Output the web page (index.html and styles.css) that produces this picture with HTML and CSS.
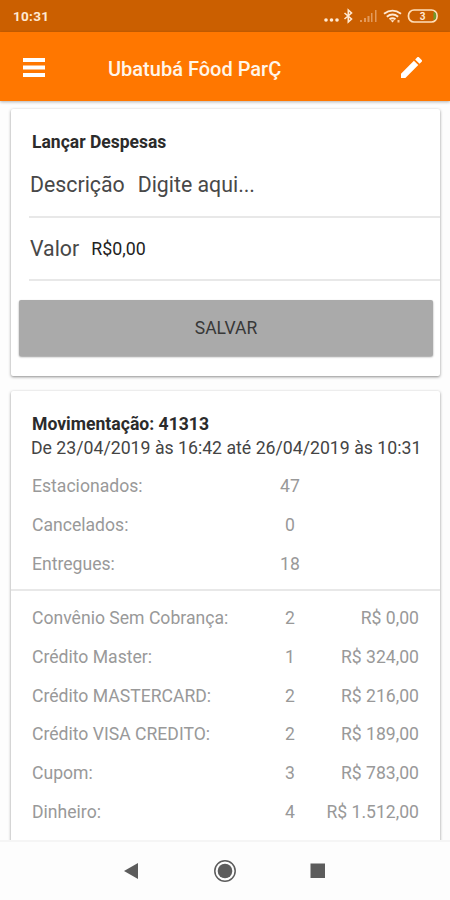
FILE: index.html
```html
<!DOCTYPE html>
<html lang="pt-BR">
<head>
    <meta charset="UTF-8">
    <meta name="viewport" content="width=device-width, initial-scale=1.0">
    <title>Ubatubá Fôod ParÇ</title>
    <link rel="stylesheet" href="styles.css">
</head>
<body>
    <div class="screen">
        <!-- Status Bar -->
        <div class="status-bar">
            <span class="clock">10:31</span>
            <svg class="status-icons" width="116" height="18" viewBox="0 0 116 18">
                <g fill="#ffe9d2">
                    <circle cx="2" cy="13" r="1.8"/>
                    <circle cx="7.500" cy="13" r="1.8"/>
                    <circle cx="13" cy="13" r="1.8"/>
                </g>
                <path d="M20.500 6 L27.500 12 L24.300 15 V3 L27.500 6 L20.500 12" fill="none" stroke="#ffe9d2" stroke-width="1.6"/>
                <g fill="#e39a5b">
                    <rect x="36" y="13" width="2" height="2"/>
                    <rect x="40" y="11" width="2" height="4"/>
                    <rect x="43.500" y="9" width="2" height="6"/>
                    <rect x="47" y="6" width="1.500" height="9"/>
                    <rect x="51" y="3" width="1.500" height="12"/>
                </g>
                <g fill="none" stroke="#ffe9d2" stroke-width="1.9">
                    <path d="M60 6.800 Q68.500 .5 77 6.800"/>
                    <path d="M62.800 9.700 Q68.500 5.300 74.200 9.700"/>
                    <path d="M65.500 12.300 Q68.500 10 71.500 12.300"/>
                </g>
                <path d="M66.500 13.300 H70.500 L68.500 15.600 Z" fill="#ffe9d2"/>
                <rect x="73.500" y="13" width="2" height="2.500" fill="#ffc794"/>
                <rect x="84.500" y="3" width="28.500" height="12" rx="5.500" fill="none" stroke="#ffe0bb" stroke-width="1.700"/>
                <path d="M109.500 5 Q112.500 5 112.200 9 Q112.500 13 109.500 13 Z" fill="#6f9a2c"/>
                <text class="battery-text" x="98.500" y="12.800" text-anchor="middle">3</text>
            </svg>
        </div>

        <!-- Header -->
        <div class="header">
            <svg class="menu-icon" width="22" height="19" viewBox="0 0 22 19">
                <path d="M0 2 H22 M0 9.500 H22 M0 17 H22" stroke="#fff" stroke-width="3.800"/>
            </svg>
            <h1>Ubatubá Fôod ParÇ</h1>
            <svg class="edit-icon" width="21" height="21" viewBox="3 3 18 18">
                <path fill="#fff" d="M3 17.250V21h3.750L17.810 9.940l-3.750-3.750L3 17.250zM20.710 7.040c.39-.39.39-1.020 0-1.410l-2.340-2.340c-.39-.39-1.020-.39-1.410 0l-1.830 1.830 3.750 3.750 1.830-1.830z"/>
            </svg>
        </div>

        <div class="content">
            <!-- Expense Form -->
            <div class="card form-card">
                <h2>Lançar Despesas</h2>
                <div class="field">
                    <span class="label">Descrição</span>
                    <span class="placeholder">Digite aqui...</span>
                </div>
                <div class="field value-field">
                    <span class="label">Valor</span>
                    <span class="amount">R$0,00</span>
                </div>
                <button class="save">SALVAR</button>
            </div>

            <!-- Movement -->
            <div class="card movement-card">
                <h2>Movimentação: 41313</h2>
                <p class="period">De 23/04/2019 às 16:42 até 26/04/2019 às 10:31</p>
                <div class="rows">
                    <div class="row"><span>Estacionados:</span><span class="count">47</span></div>
                    <div class="row"><span>Cancelados:</span><span class="count">0</span></div>
                    <div class="row"><span>Entregues:</span><span class="count">18</span></div>
                </div>
                <div class="rows payments">
                    <div class="row"><span>Convênio Sem Cobrança:</span><span class="count">2</span><span class="total">R$ 0,00</span></div>
                    <div class="row"><span>Crédito Master:</span><span class="count">1</span><span class="total">R$ 324,00</span></div>
                    <div class="row"><span>Crédito MASTERCARD:</span><span class="count">2</span><span class="total">R$ 216,00</span></div>
                    <div class="row"><span>Crédito VISA CREDITO:</span><span class="count">2</span><span class="total">R$ 189,00</span></div>
                    <div class="row"><span>Cupom:</span><span class="count">3</span><span class="total">R$ 783,00</span></div>
                    <div class="row"><span>Dinheiro:</span><span class="count">4</span><span class="total">R$ 1.512,00</span></div>
                </div>
            </div>
        </div>

        <!-- Navigation Bar -->
        <div class="nav-bar">
            <svg width="24" height="24" viewBox="0 0 24 24">
                <path d="M4 12 L18 4 V20 Z" fill="#5c5c5c"/>
            </svg>
            <svg width="24" height="24" viewBox="0 0 24 24">
                <circle cx="12" cy="12" r="10.200" fill="none" stroke="#5c5c5c" stroke-width="1.500"/>
                <circle cx="12" cy="12" r="7.300" fill="#5c5c5c"/>
            </svg>
            <svg width="24" height="24" viewBox="0 0 24 24">
                <rect x="4.500" y="4.500" width="14.500" height="14.500" fill="#5c5c5c"/>
            </svg>
        </div>
    </div>
</body>
</html>
```

FILE: styles.css
```css
body {
    margin: 0;
    font-family: Roboto, "Liberation Sans", sans-serif;
    background-color: #fdfdfd;
}
.screen {
    display: flex;
    flex-direction: column;
    height: 900px;
    overflow: hidden;
    white-space: nowrap;
}

/* Status Bar */
.status-bar {
    display: flex;
    justify-content: space-between;
    align-items: center;
    flex-shrink: 0;
    height: 32px;
    padding: 0 10px 0 13px;
    box-sizing: border-box;
    background-color: #cb5f00;
}
.clock {
    color: #ffe9d2;
    font-size: 13.5px;
    font-weight: bold;
    letter-spacing: 0.3px;
}
.battery-text {
    fill: #ffe9d2;
    font-size: 10px;
    font-weight: bold;
}

/* Header */
.header {
    display: flex;
    align-items: center;
    flex-shrink: 0;
    height: 69px;
    padding: 2px 28px 0 23px;
    box-sizing: border-box;
    background-color: #ff7700;
    box-shadow: 0 1px 3px rgba(0, 0, 0, 0.3);
    z-index: 1;
}
.header h1 {
    flex: 1;
    margin: 2px 0 0 63px;
    color: #fff6ea;
    font-size: 20px;
    font-weight: 500;
    line-height: 24px;
}

/* Cards */
.content {
    flex: 1;
    min-height: 0;
    overflow: hidden;
    padding: 8px 10px 0 11px;
}
.card {
    background-color: #fff;
    border-radius: 2px;
    box-shadow: 0 1px 3px rgba(0, 0, 0, 0.45);
    box-sizing: border-box;
    overflow: hidden;
}
.card h2 {
    margin: 0;
    padding-left: 21px;
    color: #2b2b2b;
    font-size: 17.5px;
    font-weight: bold;
    line-height: 24px;
}
.form-card {
    height: 267px;
    padding-top: 21px;
    margin-bottom: 15px;
}
.field {
    display: flex;
    align-items: center;
    height: 61px;
    margin-left: 18px;
    padding-left: 1px;
    border-bottom: 2px solid #e8e8e8;
    color: #484848;
    font-size: 21.3px;
}
.form-card h2 + .field {
    align-items: flex-start;
    padding-top: 9px;
    height: 53px;
    line-height: 44px;
}
.placeholder {
    margin-left: 13px;
}
.amount {
    margin-left: 12px;
    color: #222;
    font-size: 17.8px;
}
.save {
    display: block;
    width: 414px;
    height: 56px;
    margin: 19px 0 0 8px;
    border: none;
    border-radius: 2px;
    background-color: #aaa;
    box-shadow: 0 1px 2px rgba(0, 0, 0, 0.4);
    color: #383838;
    font-family: inherit;
    font-size: 17.5px;
}

/* Movement */
.movement-card {
    height: 470px;
    padding-top: 21px;
}
.movement-card h2 {
    font-size: 17.6px;
}
.period {
    margin: 0;
    padding-left: 20px;
    color: #444;
    font-size: 17.7px;
    line-height: 24px;
}
.rows {
    padding: 7px 21px 6px;
}
.payments {
    padding-top: 8px;
    border-top: 2px solid #e8e8e8;
}
.row {
    display: grid;
    grid-template-columns: 228px 60px 99px;
    align-items: center;
    height: 38.7px;
    color: #999;
    font-size: 17.6px;
}
.count {
    text-align: center;
}
.total {
    text-align: right;
}

/* Navigation Bar */
.nav-bar {
    display: flex;
    justify-content: center;
    align-items: center;
    gap: 69px;
    flex-shrink: 0;
    height: 60px;
    box-sizing: border-box;
    border-top: 2px solid #f5f5f5;
    background-color: #fdfdfd;
}
```
